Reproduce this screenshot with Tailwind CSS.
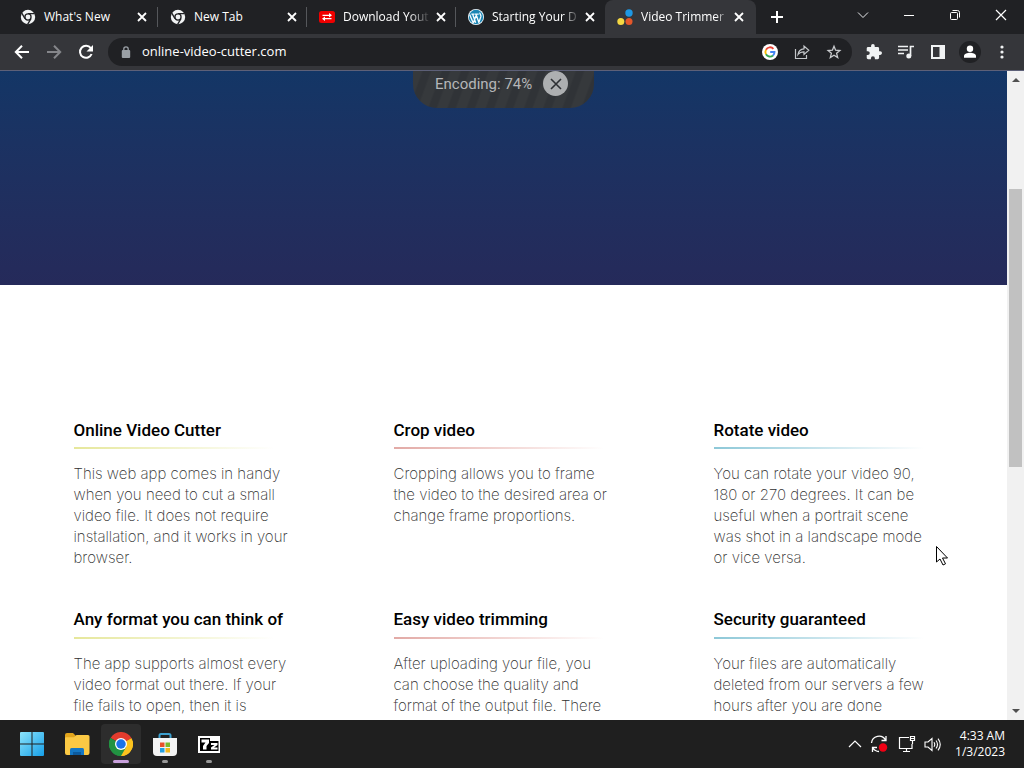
<!DOCTYPE html>
<html lang="en">
<head>
<meta charset="utf-8">
<meta name="viewport" content="width=device-width, initial-scale=1">
<title>Video Trimmer</title>
<script src="https://cdn.jsdelivr.net/npm/@tailwindcss/browser@4"></script>
</head>
<body class="flex h-screen flex-col overflow-hidden bg-white font-['Open_Sans','Noto_Sans',sans-serif] text-white">

<svg class="hidden">
  <symbol id="x" viewBox="0 0 12 12"><path d="M2 2l8 8M10 2l-8 8" stroke="currentColor" stroke-width="1.8" fill="none"/></symbol>
  <symbol id="chrome-mono" viewBox="0 0 16 16">
    <circle cx="8" cy="8" r="7.2" fill="#f1f3f4"/>
    <path d="M8 4.6H14.5M5 9.7L1.8 4.2M11 9.7L7.6 15.4" stroke="#202124" stroke-width="1.3"/>
    <circle cx="8" cy="8" r="3.7" fill="#202124"/><circle cx="8" cy="8" r="2.4" fill="#f1f3f4"/>
  </symbol>
</svg>

<!-- Tab strip -->
<header class="flex h-[34px] shrink-0 bg-[#202124] pl-[9px] text-xs">
  <nav class="flex min-w-0" aria-label="Tabs">
    <div class="flex w-[149px] items-center pl-[11px]">
      <svg class="size-4 shrink-0"><use href="#chrome-mono"/></svg>
      <a href="#" class="ml-2 w-[88px] whitespace-nowrap">What's New</a>
      <button aria-label="Close What's New" class="ml-1 shrink-0"><svg class="size-3"><use href="#x"/></svg></button>
      <span class="ml-auto h-5 w-px bg-[#55575b]"></span>
    </div>
    <div class="flex w-[149px] items-center pl-3">
      <svg class="size-4 shrink-0"><use href="#chrome-mono"/></svg>
      <a href="#" class="ml-2 w-[88px] whitespace-nowrap">New Tab</a>
      <button aria-label="Close New Tab" class="ml-1 shrink-0"><svg class="size-3"><use href="#x"/></svg></button>
      <span class="ml-auto h-5 w-px bg-[#55575b]"></span>
    </div>
    <div class="flex w-[149px] items-center pl-3">
      <svg class="size-4 shrink-0" viewBox="0 0 16 16"><rect y="2" width="16" height="12" rx="2.5" fill="#f00000"/><path d="M3.5 6.3h8M4.500 9.700h8" stroke="#fff" stroke-width="1.300"/><path d="M10 4l3 2.300-3 2.300zM6 7.400L3 9.700 6 12z" fill="#fff"/></svg>
      <a href="#" class="ml-2 w-[88px] mask-r-from-75% whitespace-nowrap">Download Yout</a>
      <button aria-label="Close Download Youtube" class="ml-1 shrink-0"><svg class="size-3"><use href="#x"/></svg></button>
      <span class="ml-auto h-5 w-px bg-[#55575b]"></span>
    </div>
    <div class="flex w-[149px] items-center pl-3">
      <svg class="size-4 shrink-0" viewBox="0 0 24 24"><circle cx="12" cy="12" r="12" fill="#f4fbff"/><circle cx="12" cy="12" r="10.800" fill="#1b85b4"/><path d="M2.500 8.200L8 21.500M5 7.600h4M7 8l4.500 12.500M9.500 7.600h6.500M12 8l4.500 12.500M8 21l4-11M16 21l3.300-9.500c.7-3-1.800-3.600-1.600-6" stroke="#f4fbff" stroke-width="2" fill="none"/></svg>
      <a href="#" class="ml-2 w-[88px] mask-r-from-80% whitespace-nowrap">Starting Your D</a>
      <button aria-label="Close Starting Your Dev" class="ml-1 shrink-0"><svg class="size-3"><use href="#x"/></svg></button>
    </div>
    <div class="flex w-[151px] items-center rounded-t-lg bg-[#35363a] pl-3">
      <svg class="size-4 shrink-0" viewBox="0 0 16 16"><circle cx="12" cy="4" r="3.700" fill="#1e98e4"/><circle cx="3.800" cy="12.500" r="3.500" fill="#f5d842"/><circle cx="12" cy="12.500" r="3.500" fill="#e4572a"/></svg>
      <a href="#" class="ml-2 w-[88px] mask-r-from-85% whitespace-nowrap">Video Trimmer</a>
      <button aria-label="Close Video Trimmer" class="ml-1 shrink-0"><svg class="size-3"><use href="#x"/></svg></button>
    </div>
    <button aria-label="New tab" class="ml-[11px] flex w-5 items-center justify-center"><svg class="size-3" viewBox="0 0 12 12"><path d="M6 0v12M0 6h12" stroke="#fff" stroke-width="2"/></svg></button>
  </nav>
  <div class="ml-auto flex h-[29px] shrink-0">
    <button aria-label="Search tabs" class="flex w-[46px] items-center justify-center"><svg class="size-3" viewBox="0 0 12 12"><path d="M1 3.500l5 5 5-5" stroke="#e8eaed" fill="none"/></svg></button>
    <button aria-label="Minimize" class="flex w-[46px] items-center justify-center"><svg class="size-3" viewBox="0 0 12 12"><path d="M1 6.500h10" stroke="#fff"/></svg></button>
    <button aria-label="Restore" class="flex w-[46px] items-center justify-center"><svg class="size-3" viewBox="0 0 12 12"><rect x="1.500" y="3.500" width="7" height="7" rx="1" stroke="#fff" fill="none"/><path d="M3.500 1.500h5a2 2 0 0 1 2 2v5" stroke="#fff" fill="none"/></svg></button>
    <button aria-label="Close window" class="flex w-[46px] items-center justify-center"><svg class="size-3" viewBox="0 0 12 12"><path d="M1 1l10 10M11 1L1 11" stroke="#fff" stroke-width="1.200"/></svg></button>
  </div>
</header>

<!-- Toolbar -->
<div class="flex h-[37px] shrink-0 items-center border-b border-[#5d6078] bg-[#35363a] px-[6px]">
  <button aria-label="Back" class="flex w-8 justify-center"><svg class="size-4" viewBox="0 0 16 16"><path d="M15 8H2M8 1.800L1.800 8 8 14.200" stroke="#fff" stroke-width="2" fill="none"/></svg></button>
  <button aria-label="Forward" class="flex w-8 justify-center"><svg class="size-4" viewBox="0 0 16 16"><path d="M1 8h13M8 1.800L14.200 8 8 14.200" stroke="#85868a" stroke-width="2" fill="none"/></svg></button>
  <button aria-label="Reload" class="flex w-8 justify-center"><svg class="size-4" viewBox="0 0 16 16"><path d="M13.600 10A6 6 0 1 1 12.800 4.200" stroke="#fff" stroke-width="2" fill="none"/><path d="M15 1v6.500H8.500z" fill="#fff"/></svg></button>
  <div class="ml-[6px] flex h-7 min-w-0 flex-1 items-center rounded-full bg-[#202124] pl-3">
    <svg class="size-3 shrink-0" viewBox="0 0 12 12"><rect x="1.800" y="4" width="8.400" height="8" rx="1" fill="#9aa0a6"/><path d="M3.800 5V3a2.200 2.200 0 0 1 4.400 0v2" stroke="#9aa0a6" stroke-width="1.300" fill="none"/></svg>
    <input aria-label="Address" value="online-video-cutter.com" class="ml-[10px] min-w-0 flex-1 bg-transparent text-[13px] text-white outline-none">
    <button aria-label="Google" class="flex w-8 justify-center"><svg class="size-4" viewBox="0 0 16 16"><circle cx="8" cy="8" r="8" fill="#fff"/><g fill="none" stroke-width="1.900"><path d="M11.400 4.800A4.600 4.600 0 0 0 4 5.700" stroke="#ea4335"/><path d="M4 5.700a4.600 4.600 0 0 0 0 4.600" stroke="#fbbc05"/><path d="M4 10.300a4.600 4.600 0 0 0 7 1.200" stroke="#34a853"/><path d="M11 11.500A4.600 4.600 0 0 0 12.500 8H8.200" stroke="#4285f4"/></g></svg></button>
    <button aria-label="Share" class="flex w-8 justify-center"><svg class="size-4" viewBox="0 0 16 16"><path d="M1.500 5v9.500h11V11M4 10.500c.6-3.800 2.800-5.500 6-5.700V2l4.800 4.300L10 10.500V7.800c-2.800 0-4.500.8-6 2.700z" stroke="#c4c7ca" stroke-width="1.200" fill="none"/></svg></button>
    <button aria-label="Bookmark" class="mr-[2px] flex w-8 justify-center"><svg class="size-4" viewBox="0 0 16 16"><path d="M8 2.200l1.600 4 4.300.3-3.300 2.800 1.100 4.300L8 11.300l-3.700 2.300 1.100-4.300L2.100 6.500l4.300-.3z" stroke="#c9cbce" stroke-width="1.300" fill="none"/></svg></button>
  </div>
  <div class="ml-[6px] flex items-center">
    <button aria-label="Extensions" class="flex w-8 justify-center"><svg class="size-4" viewBox="1 1 22 22"><path d="M20.500 11H19V7a2 2 0 0 0-2-2h-4V3.500a2.500 2.500 0 0 0-5 0V5H4a2 2 0 0 0-2 2v3.800h1.500a2.700 2.700 0 0 1 0 5.400H2V20c0 1.100.9 2 2 2h3.800v-1.500a2.700 2.700 0 0 1 5.400 0V22H17a2 2 0 0 0 2-2v-4h1.500a2.500 2.500 0 0 0 0-5z" fill="#f1f3f4"/></svg></button>
    <button aria-label="Media controls" class="flex w-8 justify-center"><svg class="size-4" viewBox="0 0 16 16"><path d="M0 2.500h10M0 6h10M0 9.500h6M12.500 12V2.500H16" stroke="#f1f3f4" stroke-width="1.700" fill="none"/><circle cx="10.800" cy="12" r="2.500" fill="#f1f3f4"/></svg></button>
    <button aria-label="Side panel" class="flex w-8 justify-center"><svg class="size-[14px]" viewBox="0 0 14 14"><path d="M0 0h14v14H0zM2 2v10h6.500V2z" fill="#f1f3f4" fill-rule="evenodd"/></svg></button>
    <button aria-label="Profile" class="flex w-8 justify-center"><svg class="size-[22px]" viewBox="0 0 22 22"><circle cx="11" cy="11" r="11" fill="#202124"/><circle cx="11" cy="7.800" r="3.200" fill="#fff"/><path d="M5 16.800V15c0-2.200 3.500-3.300 6-3.300s6 1.100 6 3.300v1.800z" fill="#fff"/></svg></button>
    <button aria-label="Menu" class="flex w-8 justify-center"><svg class="h-4 w-1" viewBox="0 0 4 16"><g fill="#f1f3f4"><circle cx="2" cy="3" r="1.600"/><circle cx="2" cy="8" r="1.600"/><circle cx="2" cy="13" r="1.600"/></g></svg></button>
  </div>
</div>

<!-- Page viewport -->
<div class="flex min-h-0 flex-1">
  <main class="min-w-0 flex-1 overflow-hidden font-[Roboto,sans-serif]">
    <section class="flex h-[214px] items-start justify-center bg-linear-to-b from-[#133666] to-[#252a5a]">
      <div class="flex h-[37px] w-[181px] items-start gap-[11px] rounded-b-[24px] bg-[repeating-linear-gradient(110deg,#36393c_0_8px,#303337_10px_16px,#36393c_18px)] pl-[22px] text-[#b5b6b8]">
        <span class="text-[15px] leading-[26px] whitespace-nowrap">Encoding: 74%</span>
        <button aria-label="Cancel encoding" class="flex size-[25px] shrink-0 items-center justify-center rounded-full bg-[#adafb1] text-[#2d3034]"><svg class="size-4" viewBox="0 0 16 16"><path d="M3 3l10 10M13 3L3 13" stroke="currentColor" stroke-width="1.600"/></svg></button>
      </div>
    </section>
    <section class="mx-auto grid max-w-[960px] grid-cols-3 gap-y-10 pt-[134px] font-[Inter,sans-serif] text-[15px] leading-[21px] font-extralight text-[#303030]">
      <article class="h-[149px] pl-[50px] whitespace-nowrap">
        <h2 class="font-[Roboto,sans-serif] text-[17px] leading-[22px] font-medium text-black">Online Video Cutter</h2>
        <div class="mt-[6px] mb-[14px] h-[2px] w-[200px] bg-linear-to-r from-[#e6e79a] to-white"></div>
        <p>This web app comes in handy<br>when you need to cut a small<br>video file. It does not require<br>installation, and it works in your<br>browser.</p>
      </article>
      <article class="h-[149px] pl-[50px] whitespace-nowrap">
        <h2 class="font-[Roboto,sans-serif] text-[17px] leading-[22px] font-medium text-black">Crop video</h2>
        <div class="mt-[6px] mb-[14px] h-[2px] w-[210px] bg-linear-to-r from-[#e2aaa6] to-white"></div>
        <p>Cropping allows you to frame<br>the video to the desired area or<br>change frame proportions.</p>
      </article>
      <article class="h-[149px] pl-[50px] whitespace-nowrap">
        <h2 class="font-[Roboto,sans-serif] text-[17px] leading-[22px] font-medium text-black">Rotate video</h2>
        <div class="mt-[6px] mb-[14px] h-[2px] w-[210px] bg-linear-to-r from-[#8dc8d8] to-white"></div>
        <p>You can rotate your video 90,<br>180 or 270 degrees. It can be<br>useful when a portrait scene<br>was shot in a landscape mode<br>or vice versa.</p>
      </article>
      <article class="pl-[50px] whitespace-nowrap">
        <h2 class="font-[Roboto,sans-serif] text-[17px] leading-[22px] font-medium text-black">Any format you can think of</h2>
        <div class="mt-[7px] mb-[14px] h-[2px] w-[200px] bg-linear-to-r from-[#e6e79a] to-white"></div>
        <p>The app supports almost every<br>video format out there. If your<br>file fails to open, then it is</p>
      </article>
      <article class="pl-[50px] whitespace-nowrap">
        <h2 class="font-[Roboto,sans-serif] text-[17px] leading-[22px] font-medium text-black">Easy video trimming</h2>
        <div class="mt-[7px] mb-[14px] h-[2px] w-[210px] bg-linear-to-r from-[#e2aaa6] to-white"></div>
        <p>After uploading your file, you<br>can choose the quality and<br>format of the output file. There</p>
      </article>
      <article class="pl-[50px] whitespace-nowrap">
        <h2 class="font-[Roboto,sans-serif] text-[17px] leading-[22px] font-medium text-black">Security guaranteed</h2>
        <div class="mt-[7px] mb-[14px] h-[2px] w-[210px] bg-linear-to-r from-[#8dc8d8] to-white"></div>
        <p>Your files are automatically<br>deleted from our servers a few<br>hours after you are done</p>
      </article>
    </section>
  </main>
  <!-- Scrollbar -->
  <div class="flex w-[17px] shrink-0 flex-col items-center bg-[#f1f1f1]">
    <svg class="h-[17px] w-4" viewBox="0 0 16 17"><path d="M4 11h8L8 7z" fill="#505050"/></svg>
    <div class="mt-[101px] h-[278px] w-[13px] bg-[#c1c1c1]"></div>
    <svg class="mt-auto h-[17px] w-4" viewBox="0 0 16 17"><path d="M4 6h8l-4 4z" fill="#505050"/></svg>
  </div>
</div>

<!-- Taskbar -->
<footer class="flex h-12 shrink-0 items-center bg-[#1f1f1f] pl-[10px]">
  <button aria-label="Start" class="flex w-11 justify-center"><svg class="size-6" viewBox="0 0 24 24"><defs><linearGradient id="win" x2="1" y2="1"><stop stop-color="#8ce4fb"/><stop offset="1" stop-color="#169fe8"/></linearGradient></defs><path d="M0 1q0-1 1-1h10.500v11.500H0zM12.500 0H23q1 0 1 1v10.500H12.500zM0 12.500h11.500V24H1q-1 0-1-1zM12.500 12.500H24V23q0 1-1 1H12.500z" fill="url(#win)"/></svg></button>
  <button aria-label="File Explorer" class="flex w-[45px] justify-center"><svg class="h-6 w-[26px]" viewBox="0 0 26 24"><path d="M1 3q0-2 2-2h6l3 3v6H1z" fill="#e2a51c"/><path d="M1 6q0-.8 1-.8h8L12.500 3H24q1.500 0 1.500 1.500V21q0 2-2 2H3q-2 0-2-2z" fill="#fbc944"/><path d="M6 23v-5.500Q6 16 7.500 16h11q1.500 0 1.500 1.500V23z" fill="#1477c4"/><path d="M9 20h8v3H9z" fill="#0c5a9d"/></svg></button>
  <button aria-label="Google Chrome" class="flex h-10 w-11 justify-center"><span class="flex h-10 w-10 flex-col items-center rounded bg-[#2d2d2d] pt-2"><svg class="size-6 shrink-0" viewBox="0 0 48 48"><path d="M24 24L3.200 12A24 24 0 0 1 44.800 12z" fill="#e33b2e"/><path d="M24 24L44.800 12A24 24 0 0 1 24 48z" fill="#fcc31e"/><path d="M24 24V48A24 24 0 0 1 3.200 12z" fill="#229342"/><path d="M24 12h20.800l-10.400 6z" fill="#e33b2e"/><path d="M34.400 18H47q3 12-5 22Q34 48 24 48l10.400-18z" fill="#fcc31e"/><path d="M13.600 30L3.200 12Q-2 20 1 31q6 16 23 17l10.400-18z" fill="#229342"/><circle cx="24" cy="24" r="12" fill="#fff"/><circle cx="24" cy="24" r="9.500" fill="#1a73e8"/></svg><span class="mt-1 h-[3px] w-4 rounded-full bg-[#c8a0dc]"></span></span></button>
  <button aria-label="Microsoft Store" class="flex h-10 w-11 flex-col items-center pt-2"><svg class="size-6 shrink-0" viewBox="0 0 24 24"><path d="M6.500 8V3.500Q6.500 2 8 2h8q1.500 0 1.500 1.500V8" stroke="#3c9fce" stroke-width="2" fill="none"/><path d="M0 6h24v14q0 4-4 4H4q-4 0-4-4z" fill="#f4f4f4"/><path d="M7 10.500h4.500V15H7z" fill="#e8502a"/><path d="M12.500 10.500H17V15h-4.500z" fill="#7ab82b"/><path d="M7 16h4.500v4.500H7z" fill="#259fe1"/><path d="M12.500 16H17v4.500h-4.500z" fill="#f4b71b"/></svg><span class="mt-1 h-[3px] w-[6px] rounded-full bg-[#999]"></span></button>
  <button aria-label="7-Zip" class="flex h-10 w-11 flex-col items-center pt-2"><svg class="size-6 shrink-0" viewBox="0 0 24 24"><path d="M1 4h22v17H1z" fill="#fff"/><path d="M3 6h10v13H3zM13 9h8.500v10H13z" fill="#000"/><path d="M4.500 7.500H12V11l-2.500 3v3.500H6V14l2.500-3.500h-4z" fill="#fff"/><path d="M14 11h6.500v2L17 15.500h3.500v2H14v-2l3.500-2.500H14z" fill="#fff"/></svg><span class="mt-1 h-[3px] w-[6px] rounded-full bg-[#999]"></span></button>
  <div class="ml-auto flex items-center gap-2 pr-[19px]">
    <button aria-label="Hidden icons"><svg class="size-[14px]" viewBox="0 0 14 14"><path d="M1 10l6-6 6 6" stroke="#fff" stroke-width="1.200" fill="none"/></svg></button>
    <button aria-label="Updates"><svg class="size-[18px]" viewBox="0 0 18 18"><path d="M1.500 8A7.500 7.500 0 0 1 15.500 5M16 1v4.500h-4.500M2.500 17v-4.500H7M2.800 13A7.500 7.500 0 0 0 9 16.500" stroke="#fff" stroke-width="1.300" fill="none"/><circle cx="13" cy="12.500" r="4.200" fill="#f00014"/></svg></button>
    <button aria-label="Network" class="ml-[2px]"><svg class="size-[18px]" viewBox="0 0 18 18"><path d="M11 2.500H1.500v11H14V9M5 16.500h7M8.500 13.500v3M12.500 1.500h4v4h-4zM12.500 3.500h4M14.500 5.500V9" stroke="#fff" stroke-width="1.200" fill="none"/></svg></button>
    <button aria-label="Volume"><svg class="size-[17px]" viewBox="0 0 17 17"><path d="M1 6h3l4-3.500v12L4 11H1zM10 6.300q1.500 2.200 0 4.400M12 4.500q3 4 0 8M14 2.700q4.500 5.800 0 11.600" stroke="#fff" stroke-width="1.100" fill="none"/></svg></button>
    <time datetime="2023-01-03T04:33" class="ml-[6px] text-right text-xs leading-4 whitespace-nowrap">4:33 AM<br>1/3/2023</time>
  </div>
</footer>

<!-- Mouse pointer -->
<svg class="pointer-events-none absolute top-[546px] left-[936px] h-5 w-3" viewBox="0 0 12 20"><path d="M.5 .5v15.500L4 13l3 6 2.500-1.200-3-5.800h5z" fill="#fff" stroke="#000"/></svg>
</body>
</html>
